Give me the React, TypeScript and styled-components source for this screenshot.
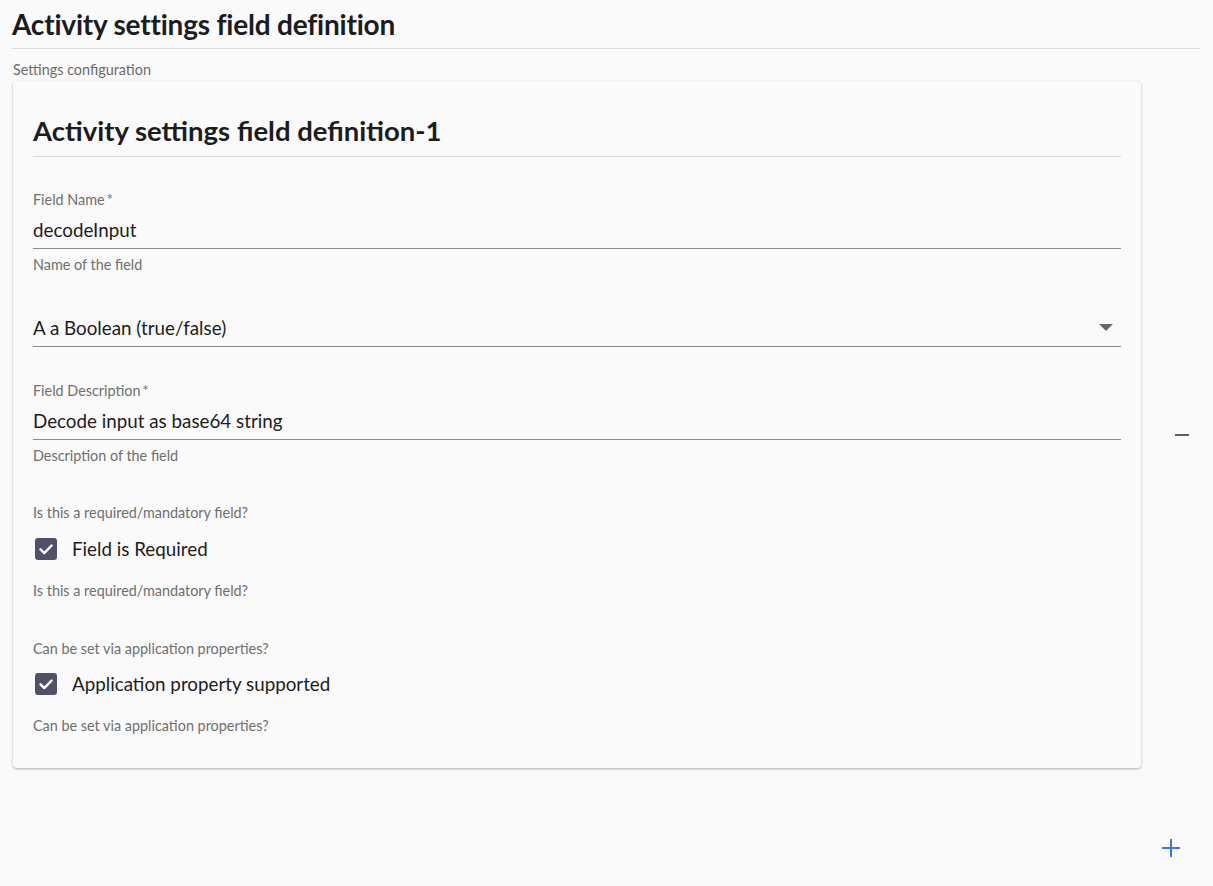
import * as React from 'react'
import styled, { createGlobalStyle } from 'styled-components'

const FONT = `'Lato', 'Noto Sans', sans-serif`

const GlobalStyle = createGlobalStyle`
  html, body {
    margin: 0;
    padding: 0;
    background: #fafafa;
    font-family: ${FONT};
    color: #1c1c1e;
  }
`

const Page = styled.div`
  padding: 4px 13px 0 12px;
  min-height: 886px;
  box-sizing: border-box;
`

const PageTitle = styled.h1`
  margin: 0;
  font-size: 28px;
  font-weight: 700;
  line-height: 40px;
  letter-spacing: -0.2px;
  padding-bottom: 4px;
  border-bottom: 1px solid #dcdcdc;
`

const Subtitle = styled.div`
  font-size: 14.4px;
  color: #6b6b6b;
  margin: 12px 0 0 1px;
  line-height: 18px;
`

const Row = styled.div`
  display: flex;
  align-items: stretch;
  margin-top: 2px;
  padding-left: 1px;
`

const Card = styled.section`
  flex: 0 0 1128px;
  box-sizing: border-box;
  background: #fafafa;
  border-radius: 4px;
  box-shadow: 0 1px 3px rgba(0, 0, 0, 0.22), 0 1px 2px rgba(0, 0, 0, 0.1);
  padding: 20px 20px 33px;
`

const CardTitle = styled.h2`
  margin: 0;
  font-size: 27.5px;
  font-weight: 700;
  line-height: 36px;
  padding: 12px 0 7px;
  border-bottom: 1px solid #dcdcdc;
`

const Side = styled.div`
  flex: 1;
  display: flex;
  align-items: center;
  justify-content: center;
  padding: 20px 0 0 22px;
`

const IconButton = styled.button<{ $color: string }>`
  border: none;
  background: none;
  padding: 0;
  display: flex;
  color: ${(p) => p.$color};
  cursor: pointer;
`

const Field = styled.div<{ $top: number }>`
  margin-top: ${(p) => p.$top}px;
`

const Label = styled.div`
  font-size: 14.4px;
  color: #6f6f6f;
  line-height: 18px;
`

const Star = styled.span`
  margin-left: 2px;
`

const InputLine = styled.div<{ $padTop: number }>`
  display: flex;
  align-items: center;
  justify-content: space-between;
  font-size: 18.8px;
  line-height: 24px;
  padding: ${(p) => p.$padTop}px 0 6px;
  border-bottom: 1px solid #8a8a8a;
`

const Helper = styled.div<{ $top?: number }>`
  font-size: 14.4px;
  color: #6f6f6f;
  line-height: 18px;
  margin-top: ${(p) => p.$top ?? 7}px;
`

const CheckRow = styled.label<{ $top: number }>`
  display: flex;
  align-items: center;
  gap: 15px;
  font-size: 18.8px;
  line-height: 24px;
  margin: ${(p) => p.$top}px 0 0 2px;
`

const Box = styled.span`
  width: 22px;
  height: 22px;
  border-radius: 3px;
  background: #4f5166;
  display: flex;
  align-items: center;
  justify-content: center;
`

const Footer = styled.div`
  display: flex;
  justify-content: flex-end;
  padding: 70px 19px 0 0;
`

const Check = () => (
  <Box>
    <svg width="22" height="22" viewBox="0 0 22 22" fill="none">
      <path d="M5.5 11.3l3.8 3.8 7.3-7.6" stroke="#fff" strokeWidth="2.4" strokeLinecap="round" strokeLinejoin="round" />
    </svg>
  </Box>
)

const Caret = () => (
  <svg width="14" height="8" viewBox="0 0 14 8" style={{ marginRight: 8 }}>
    <path d="M0 0h14L7 7z" fill="#666" />
  </svg>
)

export default function App() {
  return (
    <>
      <GlobalStyle />
      <Page>
        <PageTitle>Activity settings field definition</PageTitle>
        <Subtitle>Settings configuration</Subtitle>
        <Row>
          <Card>
            <CardTitle>Activity settings field definition-1</CardTitle>
            <Field $top={34}>
              <Label>
                Field Name<Star>*</Star>
              </Label>
              <InputLine $padTop={9}>decodeInput</InputLine>
              <Helper>Name of the field</Helper>
            </Field>
            <Field $top={33}>
              <InputLine $padTop={9}>
                A a Boolean (true/false)
                <Caret />
              </InputLine>
            </Field>
            <Field $top={35}>
              <Label>
                Field Description<Star>*</Star>
              </Label>
              <InputLine $padTop={9}>Decode input as base64 string</InputLine>
              <Helper>Description of the field</Helper>
            </Field>
            <Field $top={39}>
              <Label>Is this a required/mandatory field?</Label>
              <CheckRow $top={15}>
                <Check />
                Field is Required
              </CheckRow>
              <Helper $top={21}>Is this a required/mandatory field?</Helper>
            </Field>
            <Field $top={40}>
              <Label>Can be set via application properties?</Label>
              <CheckRow $top={14}>
                <Check />
                Application property supported
              </CheckRow>
              <Helper $top={21}>Can be set via application properties?</Helper>
            </Field>
          </Card>
          <Side>
            <IconButton $color="#5b5c6e" aria-label="remove">
              <svg width="16" height="16" viewBox="0 0 16 16">
                <rect x="1" y="7" width="14" height="2" fill="currentColor" />
              </svg>
            </IconButton>
          </Side>
        </Row>
        <Footer>
          <IconButton $color="#3a76e4" aria-label="add">
            <svg width="20" height="20" viewBox="0 0 20 20">
              <rect x="1" y="9" width="18" height="2" fill="currentColor" />
              <rect x="9" y="1" width="2" height="18" fill="currentColor" />
            </svg>
          </IconButton>
        </Footer>
      </Page>
    </>
  )
}
